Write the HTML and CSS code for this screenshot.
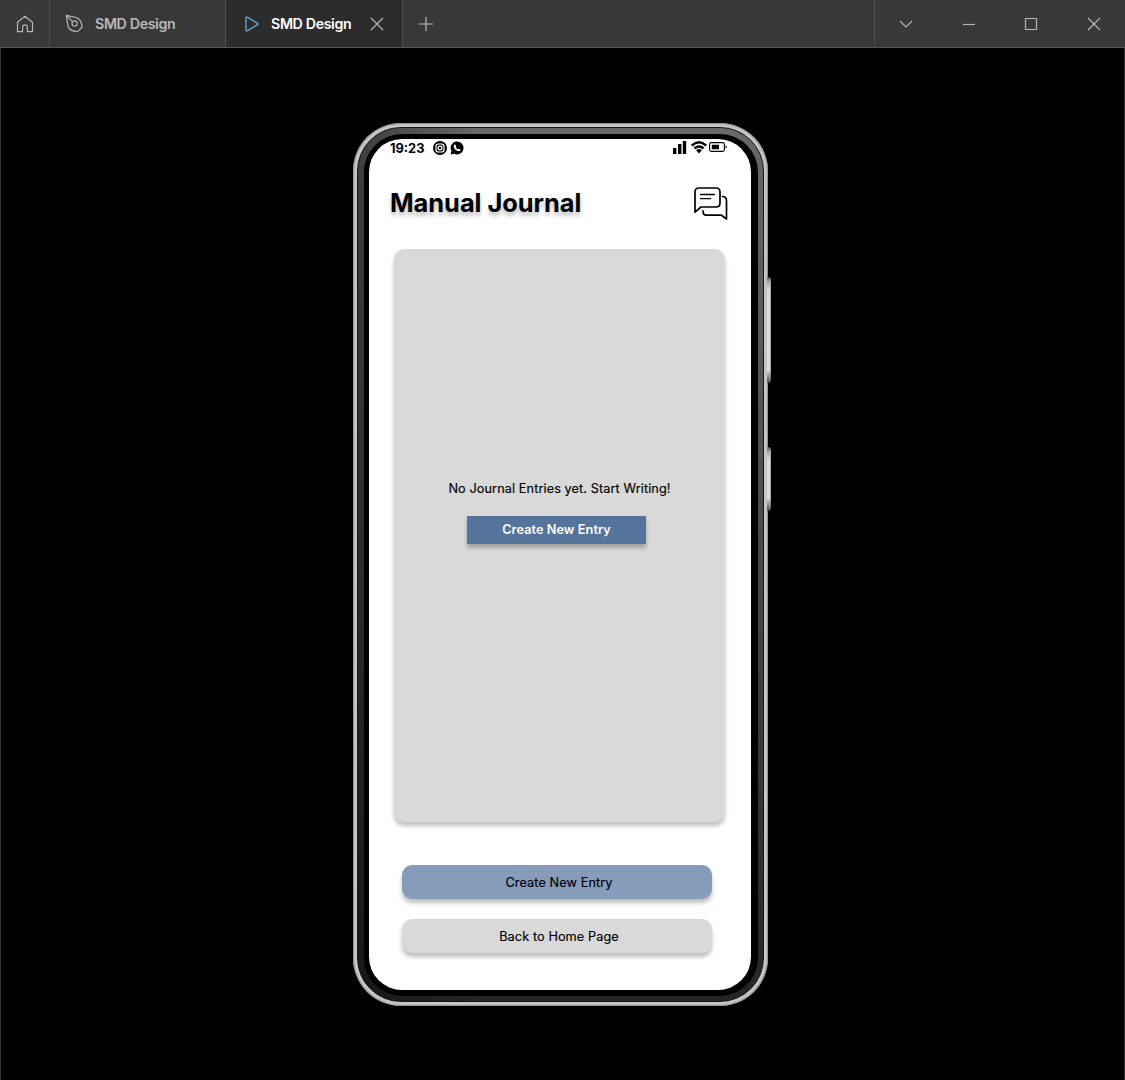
FILE: index.html
```html
<!DOCTYPE html>
<html lang="en">
<head>
<meta charset="utf-8">
<title>SMD Design</title>
<link rel="stylesheet" href="styles.css">
</head>
<body>
<header class="tabbar">
  <div class="home">
    <svg width="18" height="18" viewBox="0 0 18 18"><path d="M1.5 7.2 9 1.2l7.5 6v9.4H11.4v-4.4a2.4 2.4 0 0 0-4.8 0v4.4H1.5z"/></svg>
  </div>
  <div class="tab tab-file">
    <svg width="20" height="20" viewBox="0 0 20 20"><path d="M2.3 1.4 12 3.5C16 5 18.2 8.6 17.9 13.5L13.5 17.6C8.5 17.4 5.2 16 4 12.2z"/><path d="M2.3 1.4l6.3 6.3"/><circle cx="10.6" cy="9.4" r="2.6"/></svg>
    <span class="tab-label">SMD Design</span>
  </div>
  <div class="tab tab-active">
    <svg class="play" width="14" height="16" viewBox="0 0 14 16"><path d="M1 2.1Q1 .5 2.4 1.2L12.3 7.2Q13.4 8 12.3 8.8L2.4 14.8Q1 15.5 1 13.9z"/></svg>
    <span class="tab-label">SMD Design</span>
    <svg class="tab-close" width="14" height="14" viewBox="0 0 14 14"><path d="M1 1l12 12M13 1 1 13"/></svg>
  </div>
  <div class="new-tab">
    <svg width="14" height="14" viewBox="0 0 14 14"><path d="M0 7h14M7 0v14"/></svg>
  </div>
  <div class="controls">
    <svg width="14" height="14" viewBox="0 0 14 14"><path d="M1 4l6 6 6-6"/></svg>
    <svg width="14" height="14" viewBox="0 0 14 14"><path d="M1 7.5h12"/></svg>
    <svg width="14" height="14" viewBox="0 0 14 14"><path d="M1.5 1.5h11v11h-11z"/></svg>
    <svg width="14" height="14" viewBox="0 0 14 14"><path d="M1 1l12 12M13 1 1 13"/></svg>
  </div>
</header>
<main class="stage">
  <div class="phone">
    <i class="side-key volume"></i>
    <i class="side-key power"></i>
    <div class="rim"><div class="bezel"><div class="screen">
      <div class="status">
        <span class="time">19:23</span>
        <svg class="insta" width="14" height="14" viewBox="0 0 14 14"><circle cx="7" cy="7" r="7"/><rect class="w" x="3" y="3" width="8" height="8" rx="2.3"/><circle class="w" cx="7" cy="7" r="1.9"/><circle class="dot" cx="9.3" cy="4.7" r=".5"/></svg>
        <svg class="whats" width="14" height="14" viewBox="0 0 14 14"><path d="M.5 13.6 1.4 10.2A6.5 6.5 0 1 1 4 12.7z"/><path class="phone-glyph" d="M4.3 3.7 5.4 3.5 6.3 5.4 5.7 6.2Q6.5 7.7 8 8.4L8.8 7.7 10.6 8.5Q10.5 10.3 8.8 10.3 5.5 10 3.9 6.6 3.2 4.8 4.3 3.7z"/></svg>
        <svg class="signal" width="13" height="13" viewBox="0 0 13 13"><path d="M0 7h3.4v6H0zM5 3h3.4v10H5zM9.8 0h3.4v13H9.8z"/></svg>
        <svg class="wifi" width="16" height="13" viewBox="0 0 16 13"><path class="arc" d="M.7 4.6Q8-1.9 15.3 4.6M3.3 7.4Q8 3.4 12.7 7.4"/><path d="M5.1 9.2Q8 7 10.9 9.2L8 12.4z"/></svg>
        <svg class="battery" width="18" height="10" viewBox="0 0 18 10"><rect class="shell" x=".6" y=".6" width="14.8" height="8.8" rx="1.8"/><path d="M2.8 2.8h7.2v4.4H2.8zM16.6 3.5q1.2.3 1.2 1.5t-1.2 1.5z"/></svg>
      </div>
      <div class="heading">
        <h1>Manual Journal</h1>
        <svg class="chat" width="34" height="34" viewBox="0 0 34 34"><path d="M1 25V5Q1 1 5 1H22Q26 1 26 5V16Q26 20 22 20H7L1 25.2"/><path class="lines" d="M6.5 7.5h14M6.5 11.7h10"/><path d="M28.5 9.5Q32.5 9.5 32.5 13.5V32L27.5 28.2H12Q9 28.2 9 23.8"/></svg>
      </div>
      <section class="entries">
        <p>No Journal Entries yet. Start Writing!</p>
        <button class="create-small">Create New Entry</button>
      </section>
      <button class="action create">Create New Entry</button>
      <button class="action back">Back to Home Page</button>
    </div></div></div>
  </div>
</main>
</body>
</html>
```
FILE: styles.css
```css
* { box-sizing: border-box; }
body {
  margin: 0;
  height: 1080px;
  display: flex;
  flex-direction: column;
  overflow: hidden;
  background: #000;
  font-family: Inter, "Liberation Sans", sans-serif;
}
svg { display: block; flex: none; overflow: visible; }
button { border: 0; padding: 0; font-family: inherit; }

.tabbar {
  display: flex;
  height: 48px;
  flex: none;
  background: #383838;
  border-bottom: 1px solid #555;
}
.tabbar svg { fill: none; stroke: #b5b5b5; stroke-width: 1.2; }
.home { width: 50px; display: flex; align-items: center; justify-content: center; border-right: 1px solid #505050; }
.tab { display: flex; align-items: center; border-right: 1px solid #505050; }
.tab-file { width: 176px; padding-left: 14px; gap: 11px; color: #b8b8b8; }
.tab-active { width: 177px; padding-left: 19px; background: #2c2c2c; color: #fff; }
.tab-label { width: 81px; font-size: 14.2px; font-weight: 600; letter-spacing: -.35px; line-height: 20px; white-space: nowrap; }
.tabbar .play { stroke: #71bdf5; margin-right: 12px; }
.tab-close { margin-left: 18px; }
.new-tab { display: flex; align-items: center; margin-left: 16px; }
.controls {
  margin-left: auto;
  width: 251px;
  display: flex;
  align-items: center;
  justify-content: space-around;
  border-left: 1px solid #505050;
}

.stage {
  flex: 1;
  display: flex;
  justify-content: center;
  align-items: flex-start;
  padding: 75px 4px 0 0;
  border: solid #333;
  border-width: 0 1px;
}
.phone {
  position: relative;
  width: 415px;
  height: 883px;
  padding: 4px;
  border-radius: 48px;
  background: #c6c6c6;
  box-shadow: inset 0 0 1px 1px #8c8c8c;
}
.rim {
  height: 100%;
  padding: 6px 5px 5px 6px;
  border-radius: 44px;
  border: 1px solid #161616;
  background: linear-gradient(90deg, rgba(0,0,0,.4), transparent 30%), linear-gradient(#686868, #484848 50%, #252525);
}
.bezel { height: 100%; padding: 5px 6px 6px 5px; border-radius: 38px; background: #000; }
.screen {
  width: 382px;
  height: 851px;
  display: flex;
  flex-direction: column;
  border-radius: 33px;
  background: #fff;
  padding: 1px 23px 0 21px;
}
.side-key {
  position: absolute;
  left: 414px;
  width: 4px;
  border-radius: 0 3px 3px 0;
  background: linear-gradient(#555, #aaa 5px, transparent 13px, transparent calc(100% - 13px), #777 calc(100% - 4px), #444), linear-gradient(90deg, #ddd 65%, #888);
}
.volume { top: 154px; height: 106px; }
.power { top: 324px; height: 64px; }

.status { display: flex; height: 17px; align-items: center; }
.time { width: 43px; font-size: 12.8px; font-weight: 700; line-height: 17px; }
.insta { margin: -1px 0 0 -.5px; }
.insta .w { fill: none; stroke: #fff; stroke-width: 1.2; }
.insta .dot, .phone-glyph { fill: #fff; }
.whats { margin: -1px 0 0 3px; }
.signal { margin-left: auto; margin-top: -2px; }
.wifi { margin: -2px 2px 0 5px; }
.wifi .arc, .battery .shell { fill: none; stroke: #000; }
.wifi .arc { stroke-width: 2.4; }
.battery { margin: -3px 1px 0 0; }
.battery .shell { stroke-width: 1.1; }

.heading { display: flex; justify-content: space-between; align-items: center; height: 40px; margin-top: 26px; }
h1 { margin: 0; font-size: 25.4px; font-weight: 700; letter-spacing: -.03px; line-height: 32px; white-space: nowrap; text-shadow: 0 4px 4px rgba(0,0,0,.25); }
.chat { margin-top: 2px; fill: none; stroke: #000; stroke-width: 1.7; stroke-linejoin: round; stroke-linecap: round; }
.chat .lines { stroke-width: 1.3; }

.entries {
  width: 331px;
  height: 573px;
  margin: 26px 0 0 4px;
  display: flex;
  flex-direction: column;
  align-items: center;
  border-radius: 10px;
  background: #d9d9d9;
  box-shadow: 0 4px 4px rgba(0,0,0,.25);
}
.entries p { margin: 231px 0 0; font-size: 12.7px; letter-spacing: .1px; line-height: 18px; white-space: nowrap; -webkit-text-stroke: .15px #000; }
.create-small {
  width: 179px;
  height: 28px;
  margin: 18px 6px 0 0;
  padding-bottom: 1px;
  background: #55749c;
  color: #fff;
  font-size: 12.7px;
  font-weight: 600;
  letter-spacing: .07px;
  box-shadow: 0 4px 4px rgba(0,0,0,.25);
}
.action {
  width: 310px;
  height: 34px;
  margin-left: 12px;
  padding: 1px 0 0 4px;
  flex: none;
  border-radius: 10px;
  font-size: 12.7px;
  letter-spacing: .1px;
  color: #000;
  -webkit-text-stroke: .15px #000;
  box-shadow: 0 4px 4px rgba(0,0,0,.25);
}
.create { margin-top: 43px; background: #879cba; }
.back { margin-top: 20.4px; background: #d9d9d9; }
```
